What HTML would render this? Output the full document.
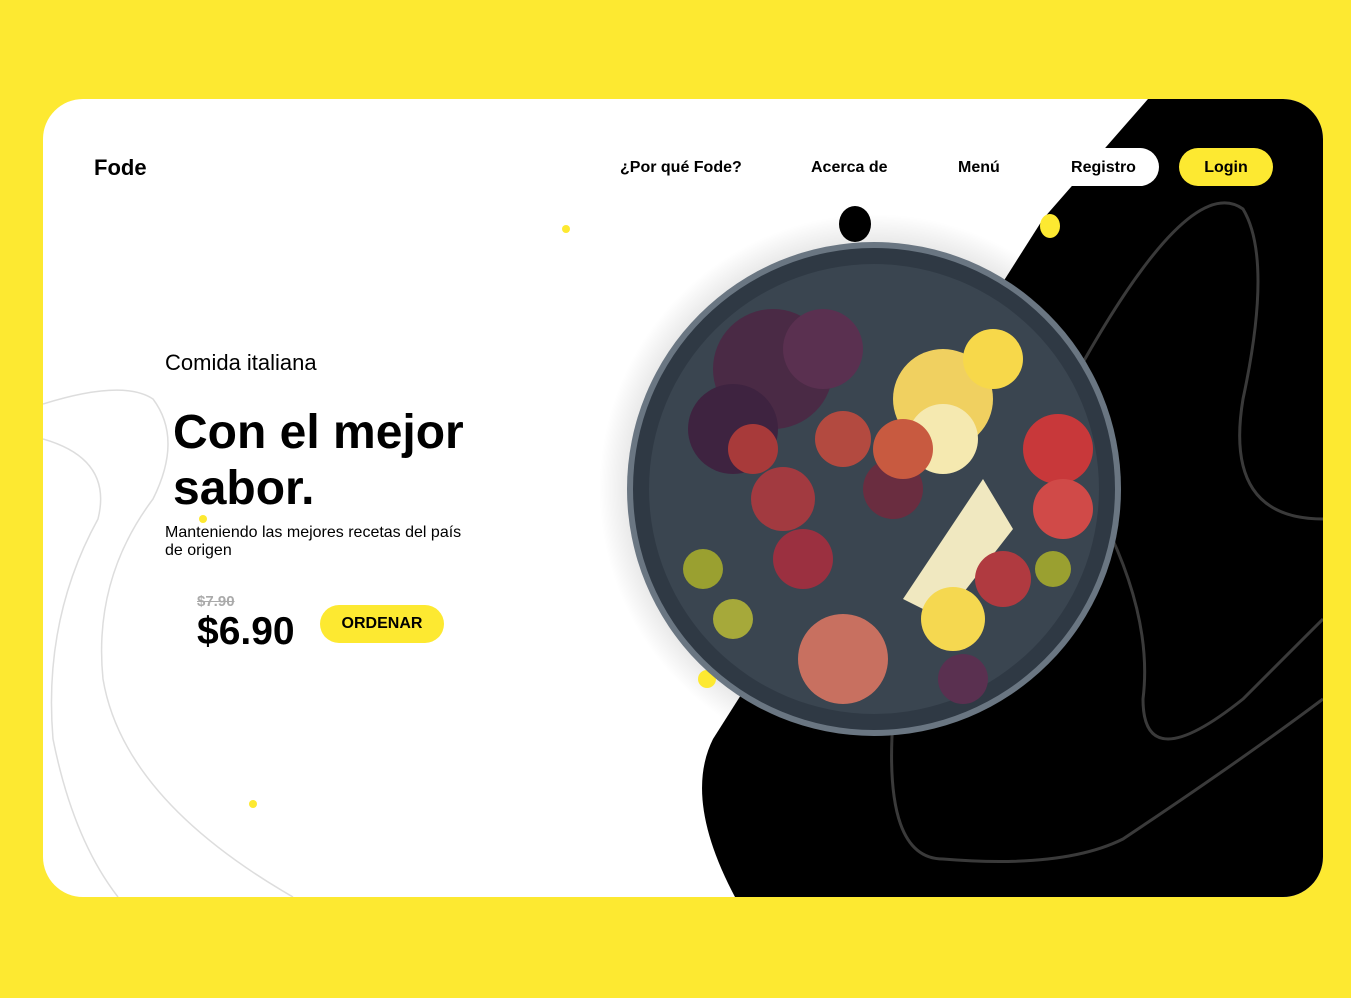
<!DOCTYPE html>
<html><head><meta charset="utf-8"><style>
body{margin:0;width:1351px;height:998px;background:#fde931;font-family:"Liberation Sans",sans-serif;overflow:hidden;position:relative}
.card{position:absolute;left:43px;top:99px;width:1280px;height:798px;background:#fff;border-radius:40px;overflow:hidden}
.t{position:absolute;color:#000;white-space:nowrap}
.nav{font-weight:bold;font-size:16px;top:60px}
.btn{position:absolute;border-radius:20px;font-weight:bold;font-size:16px;text-align:center}
</style></head><body>
<div class="card">
<svg width="1280" height="798" style="position:absolute;left:0;top:0">
<defs><radialGradient id="sh" cx="0.5" cy="0.5" r="0.5"><stop offset="0.7" stop-color="#000" stop-opacity="0.25"/><stop offset="1" stop-color="#000" stop-opacity="0"/></radialGradient></defs>
<path d="M1105 0 L1280 0 L1280 798 L692 798 Q640 700 670 640 L1000 120 Z" fill="#000"/>
<g fill="none" stroke="#3a3a3a" stroke-width="3">
<path d="M960 420 Q1130 60 1200 110 Q1230 160 1200 300 Q1180 420 1280 420"/>
<path d="M1060 420 Q1110 520 1100 600 Q1100 680 1200 600 Q1260 540 1280 520"/>
<path d="M850 620 Q840 760 900 760 Q1020 770 1080 740 Q1200 660 1280 600"/>
</g>
<g fill="none" stroke="#ddd" stroke-width="1.5">
<path d="M0 305 Q80 280 110 300 Q140 340 110 400 Q50 480 60 580 Q80 700 250 798"/>
<path d="M0 340 Q70 360 55 420 Q0 520 10 640 Q30 740 75 798"/>
</g>
<circle cx="831" cy="390" r="275" fill="url(#sh)"/>
<ellipse cx="812" cy="125" rx="16" ry="18" fill="#000"/>
<ellipse cx="1007" cy="127" rx="10" ry="12" fill="#fde931"/>
<circle cx="523" cy="130" r="4" fill="#fde931"/>
<circle cx="160" cy="420" r="4" fill="#fde931"/>
<circle cx="210" cy="705" r="4" fill="#fde931"/>
<circle cx="664" cy="580" r="9" fill="#fde931"/>
<circle cx="831" cy="390" r="247" fill="#6a7682"/>
<circle cx="831" cy="390" r="241" fill="#2f3944"/>
<circle cx="831" cy="390" r="225" fill="#3a4550"/>
<g>
<circle cx="730" cy="270" r="60" fill="#4a2a45"/><circle cx="690" cy="330" r="45" fill="#3e2340"/>
<circle cx="780" cy="250" r="40" fill="#5a3050"/>
<circle cx="900" cy="300" r="50" fill="#f0d060"/><circle cx="900" cy="340" r="35" fill="#f5e9b0"/>
<circle cx="950" cy="260" r="30" fill="#f7d84a"/>
<circle cx="1015" cy="350" r="35" fill="#c8383a"/><circle cx="1020" cy="410" r="30" fill="#d04a48"/>
<polygon points="860,500 940,380 970,430 900,520" fill="#f0e8c0"/>
<circle cx="800" cy="340" r="28" fill="#b34a40"/><circle cx="740" cy="400" r="32" fill="#a23a40"/>
<circle cx="760" cy="460" r="30" fill="#9b3040"/><circle cx="850" cy="390" r="30" fill="#6a2d40"/>
<circle cx="860" cy="350" r="30" fill="#c85a40"/>
<circle cx="660" cy="470" r="20" fill="#9aa030"/><circle cx="690" cy="520" r="20" fill="#a6a93a"/>
<circle cx="800" cy="560" r="45" fill="#c87060"/><circle cx="910" cy="520" r="32" fill="#f5d850"/>
<circle cx="960" cy="480" r="28" fill="#b03a40"/><circle cx="1010" cy="470" r="18" fill="#9aa030"/>
<circle cx="920" cy="580" r="25" fill="#5a3050"/><circle cx="710" cy="350" r="25" fill="#a83a3a"/>
</g>
</svg>
<div class="t" style="left:51px;top:56px;font-weight:bold;font-size:22px">Fode</div>
<div class="t nav" style="left:577px">¿Por qué Fode?</div>
<div class="t nav" style="left:768px">Acerca de</div>
<div class="t nav" style="left:915px">Menú</div>
<div class="btn" style="left:1005px;top:49px;width:111px;height:38px;line-height:40px;background:#fff">Registro</div>
<div class="btn" style="left:1136px;top:49px;width:94px;height:38px;line-height:40px;background:#fde931">Login</div>
<div class="t" style="left:122px;top:251px;font-size:22px">Comida italiana</div>
<div class="t" style="left:130px;top:306px;font-size:48px;font-weight:bold;line-height:56px">Con el mejor<br>sabor.</div>
<div class="t" style="left:122px;top:425px;font-size:16px;line-height:18px">Manteniendo las mejores recetas del país<br>de origen</div>
<div class="t" style="left:154px;top:494px;font-size:15px;font-weight:bold;color:#aaa;text-decoration:line-through">$7.90</div>
<div class="t" style="left:154px;top:511px;font-size:39px;font-weight:bold">$6.90</div>
<div class="btn" style="left:277px;top:506px;width:124px;height:38px;line-height:38px;background:#fde931">ORDENAR</div>
</div>
</body></html>
